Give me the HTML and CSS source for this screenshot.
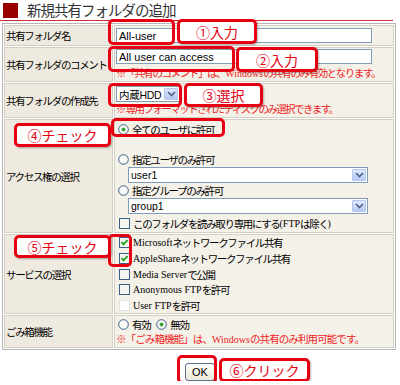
FILE: index.html
```html
<!DOCTYPE html>
<html lang="ja">
<head>
<meta charset="utf-8">
<title>新規共有フォルダの追加</title>
<link rel="stylesheet" href="styles.css">
</head>
<body>
<div class="title"><span class="sq"></span><h1>新規共有フォルダの追加</h1></div>

<table class="form">
  <tr class="r1">
    <th>共有フォルダ名</th>
    <td><input class="txt" type="text" value="All-user"></td>
  </tr>
  <tr class="r2">
    <th>共有フォルダのコメント</th>
    <td><input class="txt" type="text" value="All user can access">
      <div class="note n2">※「共有のコメント」は、<span class="lat">Windows</span>の共有のみ有効となります。</div></td>
  </tr>
  <tr class="r3">
    <th>共有フォルダの作成先</th>
    <td><div class="sel sel-s"><span class="sv">内蔵HDD</span><span class="arr"><svg width="9" height="6" viewBox="0 0 9 6"><path d="M1 1 L4.5 4.5 L8 1" fill="none" stroke="#4d6185" stroke-width="1.6"/></svg></span></div>
      <div class="note n3">※ 専用フォーマットされたディスクのみ選択できます。</div></td>
  </tr>
  <tr class="r4">
    <th>アクセス権の選択</th>
    <td>
      <div class="opt first"><svg class="rb" width="11" height="11" viewBox="0 0 11 11"><circle cx="5.5" cy="5.5" r="4.8" fill="#fbfbf9" stroke="#3d5f85"/><circle cx="5.5" cy="5.5" r="2" fill="#3aa53a"/></svg>全てのユーザに許可</div>
      <div class="opt"><svg class="rb" width="11" height="11" viewBox="0 0 11 11"><circle cx="5.5" cy="5.5" r="4.8" fill="#fbfbf9" stroke="#3d5f85"/></svg>指定ユーザのみ許可</div>
      <div class="sel sel-l"><span class="sv">user1</span><span class="arr"><svg width="9" height="6" viewBox="0 0 9 6"><path d="M1 1 L4.5 4.5 L8 1" fill="none" stroke="#4d6185" stroke-width="1.6"/></svg></span></div>
      <div class="opt"><svg class="rb" width="11" height="11" viewBox="0 0 11 11"><circle cx="5.5" cy="5.5" r="4.8" fill="#fbfbf9" stroke="#3d5f85"/></svg>指定グループのみ許可</div>
      <div class="sel sel-l"><span class="sv">group1</span><span class="arr"><svg width="9" height="6" viewBox="0 0 9 6"><path d="M1 1 L4.5 4.5 L8 1" fill="none" stroke="#4d6185" stroke-width="1.6"/></svg></span></div>
      <div class="opt ro"><svg class="cb" width="11" height="11" viewBox="0 0 11 11"><rect x="0.5" y="0.5" width="10" height="10" fill="#f4f4f0" stroke="#3d5f85"/></svg>このフォルダを読み取り専用にする<span class="lat">(FTP</span>は除く<span class="lat">)</span></div>
    </td>
  </tr>
  <tr class="r5">
    <th>サービスの選択</th>
    <td>
      <div class="opt svc"><svg class="cb" width="11" height="11" viewBox="0 0 11 11"><rect x="0.5" y="0.5" width="10" height="10" fill="#f4f4f0" stroke="#3d5f85"/><path d="M2.5 5.2 L4.5 7.4 L8.6 3" fill="none" stroke="#21a121" stroke-width="1.8"/></svg><span class="lat">Microsoft</span>ネットワークファイル共有</div>
      <div class="opt svc"><svg class="cb" width="11" height="11" viewBox="0 0 11 11"><rect x="0.5" y="0.5" width="10" height="10" fill="#f4f4f0" stroke="#3d5f85"/><path d="M2.5 5.2 L4.5 7.4 L8.6 3" fill="none" stroke="#21a121" stroke-width="1.8"/></svg><span class="lat">AppleShare</span>ネットワークファイル共有</div>
      <div class="opt svc"><svg class="cb" width="11" height="11" viewBox="0 0 11 11"><rect x="0.5" y="0.5" width="10" height="10" fill="#f4f4f0" stroke="#3d5f85"/></svg><span class="lat">Media Server</span>で公開</div>
      <div class="opt svc"><svg class="cb" width="11" height="11" viewBox="0 0 11 11"><rect x="0.5" y="0.5" width="10" height="10" fill="#f4f4f0" stroke="#3d5f85"/></svg><span class="lat">Anonymous FTP</span>を許可</div>
      <div class="opt svc"><svg class="cb" width="11" height="11" viewBox="0 0 11 11"><rect x="0.5" y="0.5" width="10" height="10" fill="#ffffff" stroke="#e2e2e2"/></svg><span class="lat">User FTP</span>を許可</div>
    </td>
  </tr>
  <tr class="r6">
    <th>ごみ箱機能</th>
    <td>
      <div class="opt"><svg class="rb" width="11" height="11" viewBox="0 0 11 11"><circle cx="5.5" cy="5.5" r="4.8" fill="#fbfbf9" stroke="#3d5f85"/></svg>有効<svg class="rb rb2" width="11" height="11" viewBox="0 0 11 11"><circle cx="5.5" cy="5.5" r="4.8" fill="#fbfbf9" stroke="#3d5f85"/><circle cx="5.5" cy="5.5" r="2" fill="#3aa53a"/></svg>無効</div>
      <div class="note n6">※「ごみ箱機能」は、<span class="lat">Windows</span>の共有のみ利用可能です。</div>
    </td>
  </tr>
</table>

<div class="actions"><button class="ok" type="button">OK</button></div>

<div class="ann ring a-in1"></div>
<div class="ann tag a-t1">①入力</div>
<div class="ann ring a-in2"></div>
<div class="ann tag a-t2">②入力</div>
<div class="ann ring a-sel"></div>
<div class="ann tag a-t3">③選択</div>
<div class="ann tag a-t4">④チェック</div>
<div class="ann ring a-rad"></div>
<div class="ann tag a-t5">⑤チェック</div>
<div class="ann ring a-chk"></div>
<div class="ann ring a-ok"></div>
<div class="ann tag a-t6">⑥クリック</div>
</body>
</html>
```
FILE: styles.css
```css
* { box-sizing: border-box; }

body {
  margin: 0;
  background: #fff;
  color: #000;
  font-family: "Noto Sans CJK JP", sans-serif;
  font-size: 10.5px;
  letter-spacing: -1.35px;
  position: relative;
}
.lat {
  font-family: "Liberation Serif", serif;
  font-size: 10px;
  letter-spacing: 0;
}

.title {
  display: flex;
  align-items: center;
  height: 21px;
  border-bottom: 1px solid #cc3333;
  margin-right: 7px;
}
.sq {
  width: 15px;
  height: 15px;
  background: #990000;
  margin: 1px 0 0 3px;
}
.title h1 {
  margin: 0 0 0 9px;
  font-size: 14.5px;
  letter-spacing: -1px;
  font-weight: normal;
  line-height: 20px;
  color: #333;
  white-space: nowrap;
}

.form {
  margin: 2px 0 0 2px;
  width: 394px;
  border: 1px solid #b7b7b7;
  border-spacing: 1px;
  table-layout: fixed;
}
.form th,
.form td {
  border: 1px solid #d4cfc3;
  padding: 0 0 0 1px;
  vertical-align: middle;
}
.form th {
  width: 109px;
  background: #efeadf;
  text-align: left;
  font-weight: normal;
  white-space: nowrap;
}
.form td {
  background: #f4f1e9;
}
.r1 td, .r1 th { height: 21px; }
.r2 td, .r2 th { height: 35px; }
.r3 td, .r3 th { height: 35px; }
.r4 td, .r4 th { height: 114px; }
.r5 td, .r5 th { height: 80px; }
.r6 td, .r6 th { height: 33px; }

.txt {
  display: block;
  width: 256px;
  height: 15px;
  margin: 0;
  border: 1px solid #7f9db9;
  background: #fff;
  padding: 0 2px;
  font: 11px "Liberation Sans", sans-serif;
  letter-spacing: 0;
  color: #000;
}

.note {
  color: #ee1c1c;
  line-height: 13px;
  letter-spacing: -1.1px;
  white-space: nowrap;
}
.note.n2 { margin-top: 2px; letter-spacing: -1.4px; }
.note.n3 { letter-spacing: -1.6px; }
.note.n6 { letter-spacing: -0.9px; }

.sel {
  display: flex;
  align-items: center;
  height: 16px;
  border: 1px solid #7f9db9;
  background: #fff;
  font: 10.5px "Liberation Sans", "Noto Sans CJK JP", sans-serif;
  letter-spacing: -0.3px;
  white-space: nowrap;
}
.sel-s { width: 64px; }
.sel-l { width: 240px; margin-left: 12px; letter-spacing: 0; }
.sv { flex: 1; padding-left: 2px; overflow: hidden; }
.arr {
  flex: none;
  width: 14px;
  height: 12px;
  margin-right: 1px;
  border: 1px solid #b5c7f0;
  border-radius: 1px;
  background: linear-gradient(#dde7fd, #b7caf6);
  display: flex;
  align-items: center;
  justify-content: center;
}

.opt {
  display: flex;
  align-items: center;
  height: 15px;
  white-space: nowrap;
}
.opt.first { margin-bottom: 15px; }
.opt.ro { margin-top: 2px; }
.svc { height: 15.6px; }
.rb { margin: 0 3px 0 2px; flex: none; }
.rb2 { margin-left: 6px; }
.cb { margin: 0 3px 0 3px; flex: none; }

.actions {
  text-align: center;
  margin-top: 13px;
}
.ok {
  width: 30px;
  height: 18px;
  padding: 0;
  border: 1px solid #5a6e8a;
  border-radius: 3px;
  background: linear-gradient(#ffffff, #ece9d8);
  font: 11px "Liberation Sans", sans-serif;
  letter-spacing: 0;
  color: #000;
}

.ann {
  position: absolute;
  border: 3px solid #e60012;
  border-radius: 5px;
}
.ring { background: transparent; }
.tag {
  background: #fff;
  color: #e60012;
  font-size: 14px;
  letter-spacing: 0;
  white-space: nowrap;
  display: flex;
  align-items: center;
  justify-content: center;
  box-shadow: 1px 1px 2px rgba(0, 0, 0, 0.3);
}
.a-in1 { left: 108px; top: 19px; width: 67px; height: 26px; }
.a-t1  { left: 177px; top: 19px; width: 80px; height: 25px; }
.a-in2 { left: 108px; top: 46px; width: 127px; height: 26px; }
.a-t2  { left: 236px; top: 47px; width: 82px; height: 25px; }
.a-sel { left: 108px; top: 83px; width: 74px; height: 24px; }
.a-t3  { left: 184px; top: 83px; width: 79px; height: 24px; }
.a-t4  { left: 14px; top: 123px; width: 97px; height: 24px; }
.a-rad { left: 111px; top: 118px; width: 114px; height: 19px; }
.a-t5  { left: 14px; top: 235px; width: 97px; height: 23px; }
.a-chk { left: 108px; top: 234px; width: 24px; height: 33px; }
.a-ok  { left: 177px; top: 355px; width: 40px; height: 29px; }
.a-t6  { left: 219px; top: 358px; width: 91px; height: 24px; }
```
